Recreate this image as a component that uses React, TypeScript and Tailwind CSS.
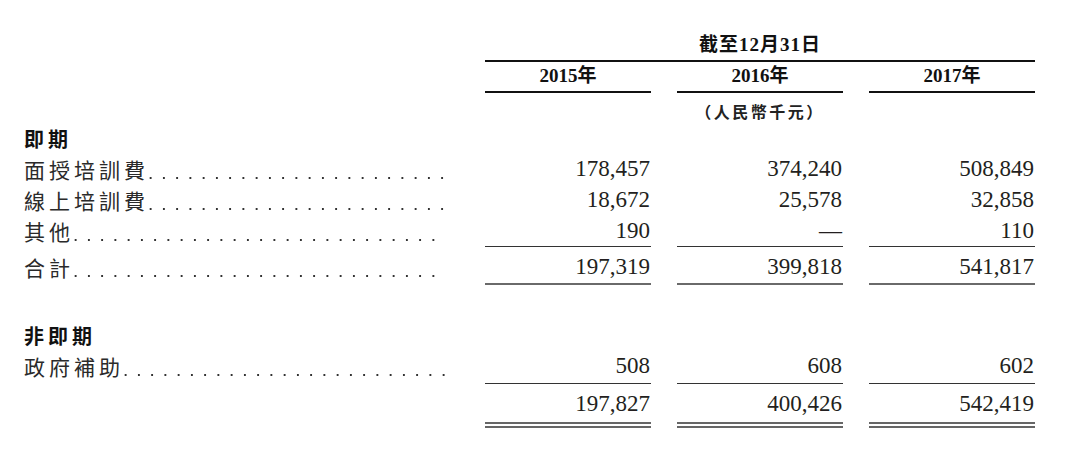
const serif = "font-['Liberation_Serif','Noto_Sans_CJK_TC',serif]";

type Row = {
  label: string;
  values: string[];
  kind?: "line" | "total" | "last" | "grand";
};

const current: Row[] = [
  { label: "面授培訓費", values: ["178,457", "374,240", "508,849"] },
  { label: "線上培訓費", values: ["18,672", "25,578", "32,858"] },
  { label: "其他", values: ["190", "—", "110"], kind: "line" },
  { label: "合計", values: ["197,319", "399,818", "541,817"], kind: "total" },
];

// dotted leader between a label and the first amount column
function Label({ text }: { text: string }) {
  return (
    <div className="flex pr-[14px] h-[31px]">
      <span className="leading-[31px] text-[21px] tracking-[4px] text-[#2a2a2a] font-['Noto_Sans_CJK_TC',sans-serif] whitespace-nowrap">
        {text}
      </span>
      <div className="flex-1 bg-[radial-gradient(circle,#333_1.1px,transparent_1.5px)] bg-[length:13.25px_4px] bg-repeat-x bg-[position:left_-5px_top_22px]" />
    </div>
  );
}

function DataRow({ row }: { row: Row }) {
  const cellBorder =
    row.kind === "line" || row.kind === "last"
      ? "border-b border-[#333]"
      : row.kind === "total"
        ? "border-b-2 border-[#6a6a6a]"
        : row.kind === "grand"
          ? "border-b-[6px] border-double border-[#666]"
          : "";
  const height =
    row.kind === "total"
      ? "h-[38px] pt-[5px]"
      : row.kind === "last"
        ? "h-[33px]"
        : row.kind === "grand"
          ? "h-[44px] pt-[5px]"
          : "h-[31px]";
  return (
    <div className={`grid grid-cols-[435px_166px_166px_166px] gap-x-[26px] ${height}`}>
      {row.label ? <Label text={row.label} /> : <div />}
      {row.values.map((v, i) => (
        <div
          key={i}
          className={`text-right pr-[1px] text-[23px] leading-[30px] text-[#231f20] ${serif} ${cellBorder}`}
        >
          {v}
        </div>
      ))}
    </div>
  );
}

function Section({ title }: { title: string }) {
  return (
    <div className="h-[31px] flex items-center">
      <span className="text-[20px] tracking-[4px] font-bold text-[#111] font-['Noto_Sans_CJK_TC',sans-serif]">
        {title}
      </span>
    </div>
  );
}

export default function App() {
  return (
    <div className="w-[1080px] h-[452px] bg-white pl-[24px] pt-[30px] overflow-hidden">
      {/* header */}
      <div className="grid grid-cols-[435px_550px] gap-x-[26px]">
        <div />
        <div className="h-[32px] border-b-2 border-[#111] flex items-center justify-center">
          <span className="text-[19px] font-bold tracking-[1px] text-[#111] font-['Liberation_Serif','Noto_Sans_CJK_TC',serif]">
            截至12月31日
          </span>
        </div>
      </div>
      <div className="grid grid-cols-[435px_166px_166px_166px] gap-x-[26px] h-[31px]">
        <div />
        {["2015年", "2016年", "2017年"].map((y) => (
          <div
            key={y}
            className="border-b-2 border-[#111] flex items-center justify-center text-[19px] font-bold text-[#111] font-['Liberation_Serif','Noto_Sans_CJK_TC',serif]"
          >
            {y}
          </div>
        ))}
      </div>
      <div className="grid grid-cols-[435px_166px_166px_166px] gap-x-[26px] h-[30px]">
        <div />
        <div />
        <div className="pt-[8px] leading-[20px] text-center text-[16px] font-bold tracking-[2.5px] text-[#222] font-['Noto_Sans_CJK_TC',sans-serif] whitespace-nowrap">
          （人民幣千元）
        </div>
        <div />
      </div>

      <Section title="即期" />
      {current.map((r) => (
        <DataRow key={r.label} row={r} />
      ))}

      <div className="h-[35px]" />
      <Section title="非即期" />
      <DataRow row={{ label: "政府補助", values: ["508", "608", "602"], kind: "last" }} />
      <DataRow row={{ label: "", values: ["197,827", "400,426", "542,419"], kind: "grand" }} />
    </div>
  );
}
